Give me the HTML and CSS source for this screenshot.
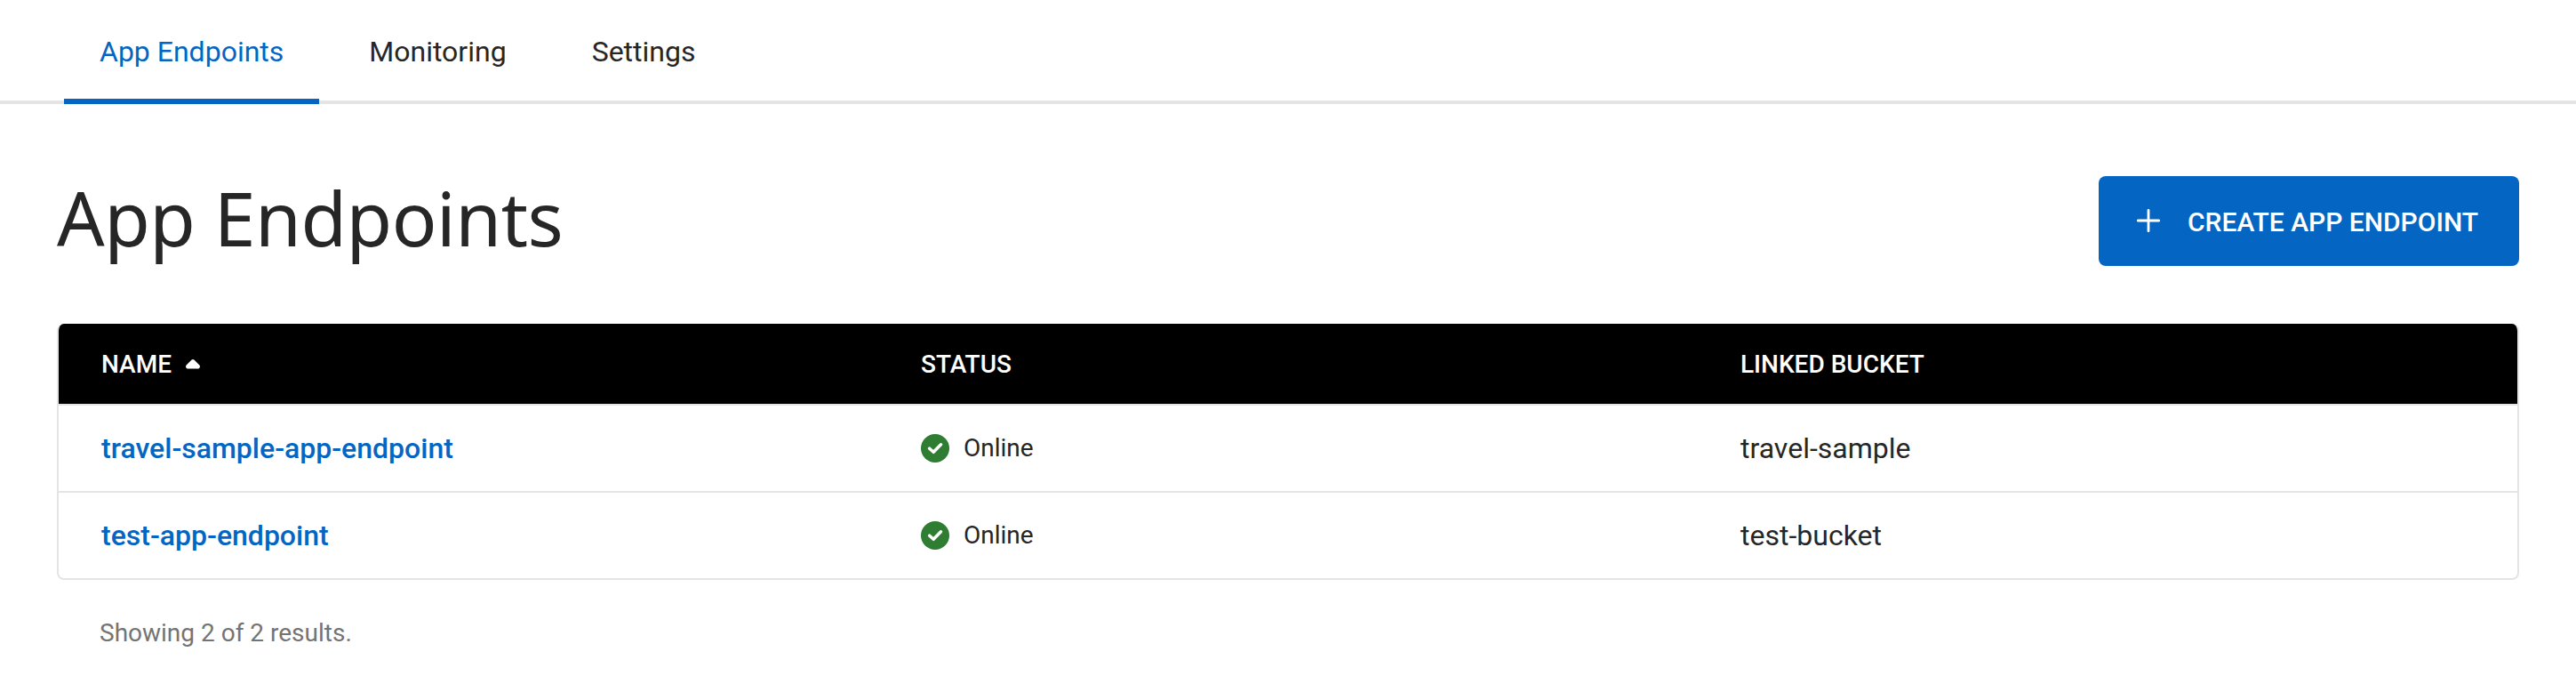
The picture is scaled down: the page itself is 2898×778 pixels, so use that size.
FILE: index.html
```html
<!DOCTYPE html>
<html lang="en">
<head>
<meta charset="utf-8">
<title>App Endpoints</title>
<link rel="stylesheet" href="styles.css">
</head>
<body>
<nav class="tabs">
  <a class="tab tab-active">App Endpoints</a>
  <a class="tab">Monitoring</a>
  <a class="tab">Settings</a>
</nav>
<main class="page">
  <header class="page-header">
    <h1 class="title">App Endpoints</h1>
    <button class="create">
      <svg class="plus" viewBox="0 0 26 26"><path d="M13 1.3v23.4M1.3 13h23.4"/></svg>
      <span class="create-label">CREATE APP ENDPOINT</span>
    </button>
  </header>
  <section class="table">
    <div class="row head">
      <div class="cell">NAME
        <svg class="sort" viewBox="0 0 16 11"><path d="M6.6.6Q8-.6 9.4.6L15.4 6.4Q16.2 7.4 15.8 9Q15.2 10.5 13.8 10.5H2.2Q.8 10.5.2 9Q-.2 7.4.6 6.4Z"/></svg>
      </div>
      <div class="cell">STATUS</div>
      <div class="cell">LINKED BUCKET</div>
    </div>
    <div class="row">
      <div class="cell"><a class="link">travel-sample-app-endpoint</a></div>
      <div class="cell status"><svg class="check" viewBox="0 0 32 32"><circle cx="16" cy="16" r="16"/><path d="M9.7 16.2l4.5 4.1 8.3-8.5"/></svg><span class="status-label">Online</span></div>
      <div class="cell">travel-sample</div>
    </div>
    <div class="row">
      <div class="cell"><a class="link">test-app-endpoint</a></div>
      <div class="cell status"><svg class="check" viewBox="0 0 32 32"><circle cx="16" cy="16" r="16"/><path d="M9.7 16.2l4.5 4.1 8.3-8.5"/></svg><span class="status-label">Online</span></div>
      <div class="cell">test-bucket</div>
    </div>
  </section>
  <p class="results">Showing 2 of 2 results.</p>
</main>
</body>
</html>
```
FILE: styles.css
```css
* { box-sizing: border-box; }
body {
  margin: 0;
  background: #fff;
  color: #262626;
  font-family: Roboto, "Liberation Sans", sans-serif;
  font-size: 32px;
}
.tabs {
  display: flex;
  gap: 16px;
  height: 117px;
  padding-left: 72px;
  box-shadow: inset 0 -4px #e4e4e4;
}
.tab {
  padding: 0 40px;
  line-height: 116px;
}
.tab-active {
  color: #0466c2;
  box-shadow: inset 0 -6px #0466c2;
}
.page { padding: 81px 64px 0; }
.page-header {
  display: flex;
  justify-content: space-between;
  height: 101px;
}
.title {
  margin: 0;
  font-family: "Noto Sans", sans-serif;
  font-weight: 400;
  font-size: 84px;
  line-height: 93px;
  letter-spacing: -0.5px;
  white-space: nowrap;
}
.create {
  display: flex;
  align-items: center;
  gap: 31px;
  width: 473px;
  padding: 0 0 0 43px;
  border: 0;
  border-radius: 8px;
  background: #0466c2;
  color: #fff;
  font: 500 30px Roboto, sans-serif;
  white-space: nowrap;
}
.create-label { padding-top: 2px; }
.plus {
  width: 26px;
  height: 26px;
  margin-bottom: 1px;
  fill: none;
  stroke: #fff;
  stroke-width: 2.8;
  stroke-linecap: round;
}
.table {
  margin-top: 65px;
  border: 2px solid #e4e4e4;
  border-top: 0;
  border-radius: 8px;
  overflow: hidden;
}
.row {
  display: grid;
  grid-template-columns: repeat(3, 1fr);
  height: 98px;
}
.row + .row { border-top: 2px solid #e4e4e4; }
.head {
  height: 90px;
  background: #000;
  color: #fff;
  font-size: 28px;
  font-weight: 500;
}
.cell {
  display: flex;
  align-items: center;
  padding: 0 48px;
}
.sort {
  width: 16px;
  height: 11px;
  margin-left: 16px;
  fill: #fff;
}
.link {
  color: #0466c2;
  font-weight: 500;
}
.status {
  gap: 16px;
  font-size: 28px;
}
.status-label { padding-bottom: 2px; }
.check {
  width: 32px;
  height: 32px;
  fill: #2e7d32;
}
.check path {
  fill: none;
  stroke: #fff;
  stroke-width: 3.5;
  stroke-linecap: round;
  stroke-linejoin: round;
}
.results {
  margin: 43px 0 0 48px;
  color: #747474;
  font-size: 28px;
  line-height: 34px;
}
```
